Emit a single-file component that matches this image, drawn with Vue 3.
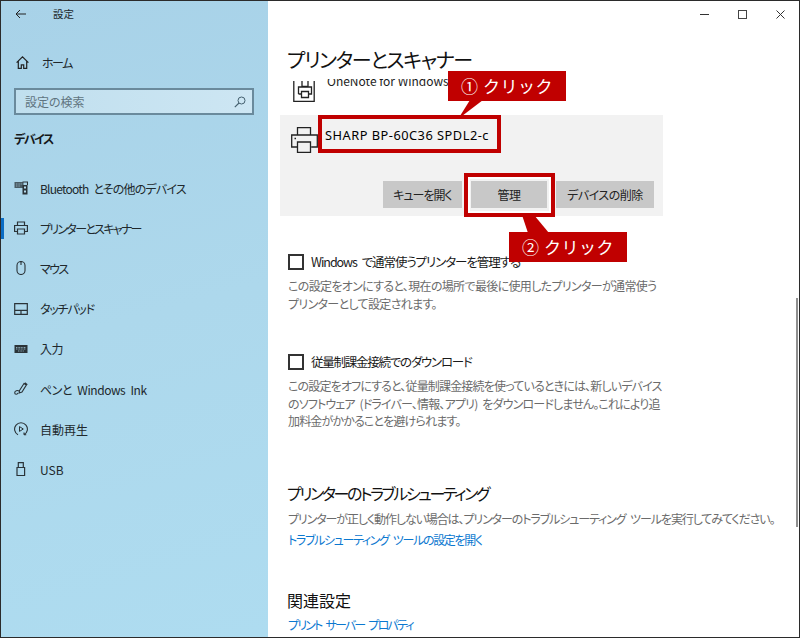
<script setup>
const navItems = [
  { label: 'Bluetooth とその他のデバイス', icon: 'bt', squeeze: -0.8 },
  { label: 'プリンターとスキャナー', icon: 'printer', squeeze: -1.7, active: true },
  { label: 'マウス', icon: 'mouse', squeeze: -1.6 },
  { label: 'タッチパッド', icon: 'touch', squeeze: -1.2 },
  { label: '入力', icon: 'keyboard', squeeze: -0.4 },
  { label: 'ペンと Windows Ink', icon: 'pen', squeeze: -0.45 },
  { label: '自動再生', icon: 'play', squeeze: 0 },
  { label: 'USB', icon: 'usb', squeeze: 0 },
]
</script>

<template>
  <div class="frame">
    <aside class="sidebar">
      <div class="topline">
        <svg class="back" width="11" height="10" viewBox="0 0 11 10"><path d="M11 5H1M5 1 1 5l4 4" fill="none" stroke="#222" stroke-width="1"/></svg>
        <span class="app-title">設定</span>
      </div>
      <div class="home">
        <svg width="13" height="13" viewBox="0 0 13 13"><path d="M.6 6.600 6.500.9l5.900 5.700M2.300 5.300v7h3v-3.500h2.400v3.500h3v-7" fill="none" stroke="#222" stroke-width="1.200"/></svg>
        <span>ホーム</span>
      </div>
      <div class="search">
        <span>設定の検索</span>
        <svg width="12" height="12" viewBox="0 0 12 12"><circle cx="7.500" cy="4.500" r="3.500" fill="none" stroke="#44606f" stroke-width="1"/><path d="M5 7 .8 11.200" stroke="#44606f" stroke-width="1.100"/></svg>
      </div>
      <div class="section">デバイス</div>
      <nav class="nav">
        <div v-for="item in navItems" :key="item.label" class="nav-item" :class="{ active: item.active }">
          <svg class="nav-icon" width="14" height="14" viewBox="0 0 14 14" fill="none" stroke="#2a3338" stroke-width="1.100">
            <template v-if="item.icon === 'bt'">
              <rect x="0.500" y="1" width="9" height="6" fill="#2a3338" fill-opacity=".75" stroke="none"/>
              <path d="M2 3h6M2 5h4" stroke="#b5dcee" stroke-width=".6" stroke-dasharray="1 .6"/>
              <path d="M8.500 1h5v3"/>
              <rect x="8.500" y="4" width="5" height="9.500" fill="#2a3338" stroke="none"/>
              <rect x="10" y="5.500" width="2" height="2" fill="#b5dcee" stroke="none"/>
              <rect x="10" y="9.500" width="2" height="2" fill="#b5dcee" stroke="none"/>
            </template>
            <template v-else-if="item.icon === 'printer'">
              <path d="M3.500 4.500V1h7v3.500M3.500 10.500H.6V4.500h12.800v6h-2.900M3.500 8h7v5h-7z" stroke-width="1.200"/>
            </template>
            <template v-else-if="item.icon === 'mouse'">
              <path d="M3 4.500a4 4 0 0 1 8 0v5a4 4 0 0 1-8 0zM7 .6v3.400" stroke-width="1.100"/>
            </template>
            <template v-else-if="item.icon === 'touch'">
              <path d="M.7 1.700h12.600v10.600H.7zM.7 8.300h12.600M7 8.300v4" stroke-width="1.200"/>
            </template>
            <template v-else-if="item.icon === 'keyboard'">
              <rect x="0.500" y="3" width="13" height="8" fill="#2a3338" stroke="none"/>
              <path d="M2 5.500h10M2 7h10M4 9h6" stroke="#b5dcee" stroke-width=".7" stroke-dasharray="1 .6"/>
            </template>
            <template v-else-if="item.icon === 'pen'">
              <path d="M5.500 8.500 10 1.500l2.300 1.600L8 10l-2.800 1zM10.800.8l2.600 1.800M5 9C3.600 8 .7 8.700.7 10.700c0 1.900 2.800 2.100 3.300.2" stroke-width="1.100"/>
            </template>
            <template v-else-if="item.icon === 'play'">
              <path d="M4 12.800A6.400 6.400 0 1 1 10 12.800M10 12.800v-2.300M10 12.800h2.200" stroke-width="1.100"/>
              <path d="M5.500 4.600v4.800L9.300 7z" stroke-width="1"/>
            </template>
            <template v-else>
              <path d="M3 5.500h7.600V13.500H3zM4.300 5.500V.7h5v4.800" stroke-width="1.200"/>
            </template>
          </svg>
          <span :style="{ letterSpacing: item.squeeze + 'px' }">{{ item.label }}</span>
        </div>
      </nav>
    </aside>

    <main class="main">
      <div class="winbar">
        <svg width="9" height="9" viewBox="0 0 9 9"><path d="M0 4.500h9" stroke="#333"/></svg>
        <svg width="9" height="9" viewBox="0 0 9 9"><rect x=".5" y=".5" width="8" height="8" fill="none" stroke="#444"/></svg>
        <svg width="9" height="9" viewBox="0 0 9 9"><path d="M.5.5l8 8M8.500.5l-8 8" stroke="#333"/></svg>
      </div>
      <h1 class="title">プリンターとスキャナー</h1>

      <div class="content">
        <div class="clipped">
          <svg class="fax" width="22" height="21" viewBox="0 0 22 21" fill="none" stroke="#222" stroke-width="1.300">
            <path d="M.8 0v20.300h20.400V0M9 0v5.500h6V0M5.500 13V6h13v7h-3M5.500 13h3M8.500 10.500h7v6h-7z"/>
          </svg>
          <span class="clip-text">OneNote for Windows</span>
        </div>

        <section class="card">
          <div class="card-head">
            <svg class="printer-icon" width="27" height="26" viewBox="0 0 27 26" fill="none" stroke="#222" stroke-width="1.300">
              <path d="M6.500 8V.7h13V8M6.500 20H.7V8h25.600v12h-6M6.500 15h13v10.300h-13zM3.500 11.500h1.500"/>
            </svg>
            <span class="printer-name">SHARP BP-60C36 SPDL2-c</span>
          </div>
          <div class="card-actions">
            <button class="btn btn-queue">キューを開く</button>
            <button class="btn btn-manage">管理</button>
            <button class="btn btn-remove">デバイスの削除</button>
          </div>
        </section>

        <label class="check first"><i class="box"></i><span>Windows で通常使うプリンターを管理する</span></label>
        <p class="desc para-one">この設定をオンにすると、現在の場所で最後に使用したプリンターが通常使う<br>プリンターとして設定されます。</p>

        <label class="check second"><i class="box"></i><span>従量制課金接続でのダウンロード</span></label>
        <p class="desc para-two">この設定をオフにすると、従量制課金接続を使っているときには、新しいデバイス<br>のソフトウェア (ドライバー、情報、アプリ) をダウンロードしません。これにより追<br>加料金がかかることを避けられます。</p>

        <h2 class="heading trouble">プリンターのトラブルシューティング</h2>
        <p class="desc single">プリンターが正しく動作しない場合は、プリンターのトラブルシューティング ツールを実行してみてください。</p>
        <a class="link first-link">トラブルシューティング ツールの設定を開く</a>

        <h2 class="heading related">関連設定</h2>
        <a class="link second-link">プリント サーバー プロパティ</a>
      </div>
      <div class="scrollbar"></div>
    </main>

    <!-- callouts over the content -->
    <div class="outline outline-name"></div>
    <div class="outline outline-manage"></div>
    <div class="tag tag-one">① クリック</div>
    <div class="tag tag-two">② クリック</div>
    <svg class="tails" width="800" height="638" viewBox="0 0 800 638">
      <path d="M470 100h13l-21 16h-2z" fill="#c00000"/>
      <path d="M522 215h12l15 18h-21z" fill="#c00000"/>
    </svg>
  </div>
</template>

<style>
html, body { margin: 0; background: #fff; }
</style>

<style scoped>
.frame {
  position: relative;
  width: 800px;
  height: 638px;
  box-sizing: border-box;
  display: flex;
  overflow: hidden;
  border: 1px solid #2b2b2b;
  font-family: "Noto Sans CJK JP", "Noto Sans", sans-serif;
  font-feature-settings: "palt";
  word-spacing: 3px;
  color: #1c1c1c;
  background: #fff;
}
.sidebar {
  width: 267px;
  flex: none;
  background: linear-gradient(165deg, #a8d2e8 0%, #add8ec 50%, #aedcf0 100%);
  font-size: 12px;
  color: #20282c;
}
.topline { display: flex; align-items: center; height: 25px; padding-left: 14px; }
.app-title { margin-left: 27px; font-size: 10.500px; }
.home { display: flex; align-items: center; gap: 13px; height: 24px; margin-top: 24px; padding-left: 15px; }
.home span { letter-spacing: -1.500px; }
.search {
  display: flex; align-items: center; justify-content: space-between;
  box-sizing: border-box;
  width: 240px; height: 27px; margin: 14px 0 0 13px; padding: 0 6px 0 9px;
  border: 2px solid #6a8a9c;
  background: linear-gradient(90deg, #c0dfee, #cde6f3);
  color: #5f7480;
}
.section { margin: 13px 0 0 13px; font-size: 12px; font-weight: 700; line-height: 22px; letter-spacing: -1.500px; color: #14181a; }
.nav { margin-top: 18px; display: flex; flex-direction: column; }
.nav-item { position: relative; display: flex; align-items: center; height: 40.200px; padding-left: 13px; gap: 12px; }
.nav-item.active::before { content: ""; position: absolute; left: 0; top: 10px; width: 3px; height: 21px; background: #0a6cc4; }
.nav-icon { flex: none; }

.main { position: relative; flex: 1; min-width: 0; }
.winbar { display: flex; justify-content: flex-end; align-items: center; gap: 29px; height: 26px; padding-right: 14px; }
.title { margin: 18px 0 0 19px; font-size: 20px; font-weight: 400; line-height: 30px; letter-spacing: -1.300px; color: #111; }
.content { margin-top: 4px; }
.clipped { display: flex; align-items: flex-end; height: 23px; margin-left: 25px; overflow: hidden; position: relative; }
.fax { flex: none; }
.clip-text { position: absolute; left: 34px; top: -6px; font-size: 12px; line-height: 16px; white-space: nowrap; word-spacing: 0; }
.card {
  margin: 13px 0 0 12px;
  width: 383px; height: 101px;
  box-sizing: border-box;
  background: #f2f2f2;
  display: flex; flex-direction: column; justify-content: space-between;
  padding: 12px 9px 8px 11px;
}
.card-head { display: flex; align-items: flex-start; gap: 7px; height: 26px; }
.printer-icon { flex: none; }
.printer-name { margin-top: -2px; font-size: 12.800px; line-height: 20px; font-weight: 400; letter-spacing: .5px; color: #000; white-space: nowrap; word-spacing: 0; font-family: "Noto Sans", sans-serif; }
.card-actions { display: flex; justify-content: flex-end; gap: 9px; }
.btn { border: 0; height: 27px; padding: 0; background: #c8c8c8; font: inherit; font-size: 12px; color: #222; font-feature-settings: "palt"; letter-spacing: -.5px; }
.btn-queue { width: 79px; letter-spacing: -1px; }
.btn-manage { width: 76px; }
.btn-remove { width: 98px; }
.check { display: flex; align-items: center; gap: 7px; margin-left: 20px; font-size: 12.500px; line-height: 18px; letter-spacing: -1.050px; color: #1a1a1a; }
.check.first { margin-top: 37px; }
.check.second { margin-top: 41px; letter-spacing: -1.250px; }
.box { width: 12px; height: 12px; border: 2px solid #333; background: #fff; flex: none; display: block; }
.desc { margin: 6px 0 0 20px; font-size: 12px; line-height: 17.500px; color: #6b6b6b; }
.para-one { letter-spacing: -.66px; }
.para-two { letter-spacing: -.83px; }
.single { white-space: nowrap; margin-top: 5px; letter-spacing: -1.100px; }
.heading { margin: 0 0 0 19px; font-size: 16px; font-weight: 400; line-height: 24px; color: #111; }
.trouble { margin-top: 51px; letter-spacing: -2.350px; }
.related { margin-top: 39px; }
.link { display: block; margin: 4px 0 0 20px; font-size: 12px; line-height: 18px; color: #0b78d0; }
.first-link { letter-spacing: -1.350px; }
.second-link { letter-spacing: -1.800px; }

.scrollbar { position: absolute; right: 1px; top: 297px; width: 2px; height: 229px; background: #8f8f8f; }

.outline { position: absolute; box-sizing: border-box; border: 4px solid #c00000; }
.outline-name { left: 317px; top: 114px; width: 183px; height: 38px; }
.outline-manage { left: 463px; top: 172px; width: 91px; height: 44px; box-shadow: inset 0 0 0 2px #fff; }
.tag {
  position: absolute; width: 118px; height: 30px;
  display: flex; align-items: center; justify-content: center;
  background: #c00000; color: #fff;
  font-size: 17px; line-height: 30px; font-weight: 400; letter-spacing: .5px;
  word-spacing: 0;
  font-feature-settings: normal;
  white-space: nowrap;
}
.tag-one { left: 447px; top: 70px; }
.tag-two { left: 508px; top: 231px; }
.tails { position: absolute; left: -1px; top: -1px; pointer-events: none; }
</style>
